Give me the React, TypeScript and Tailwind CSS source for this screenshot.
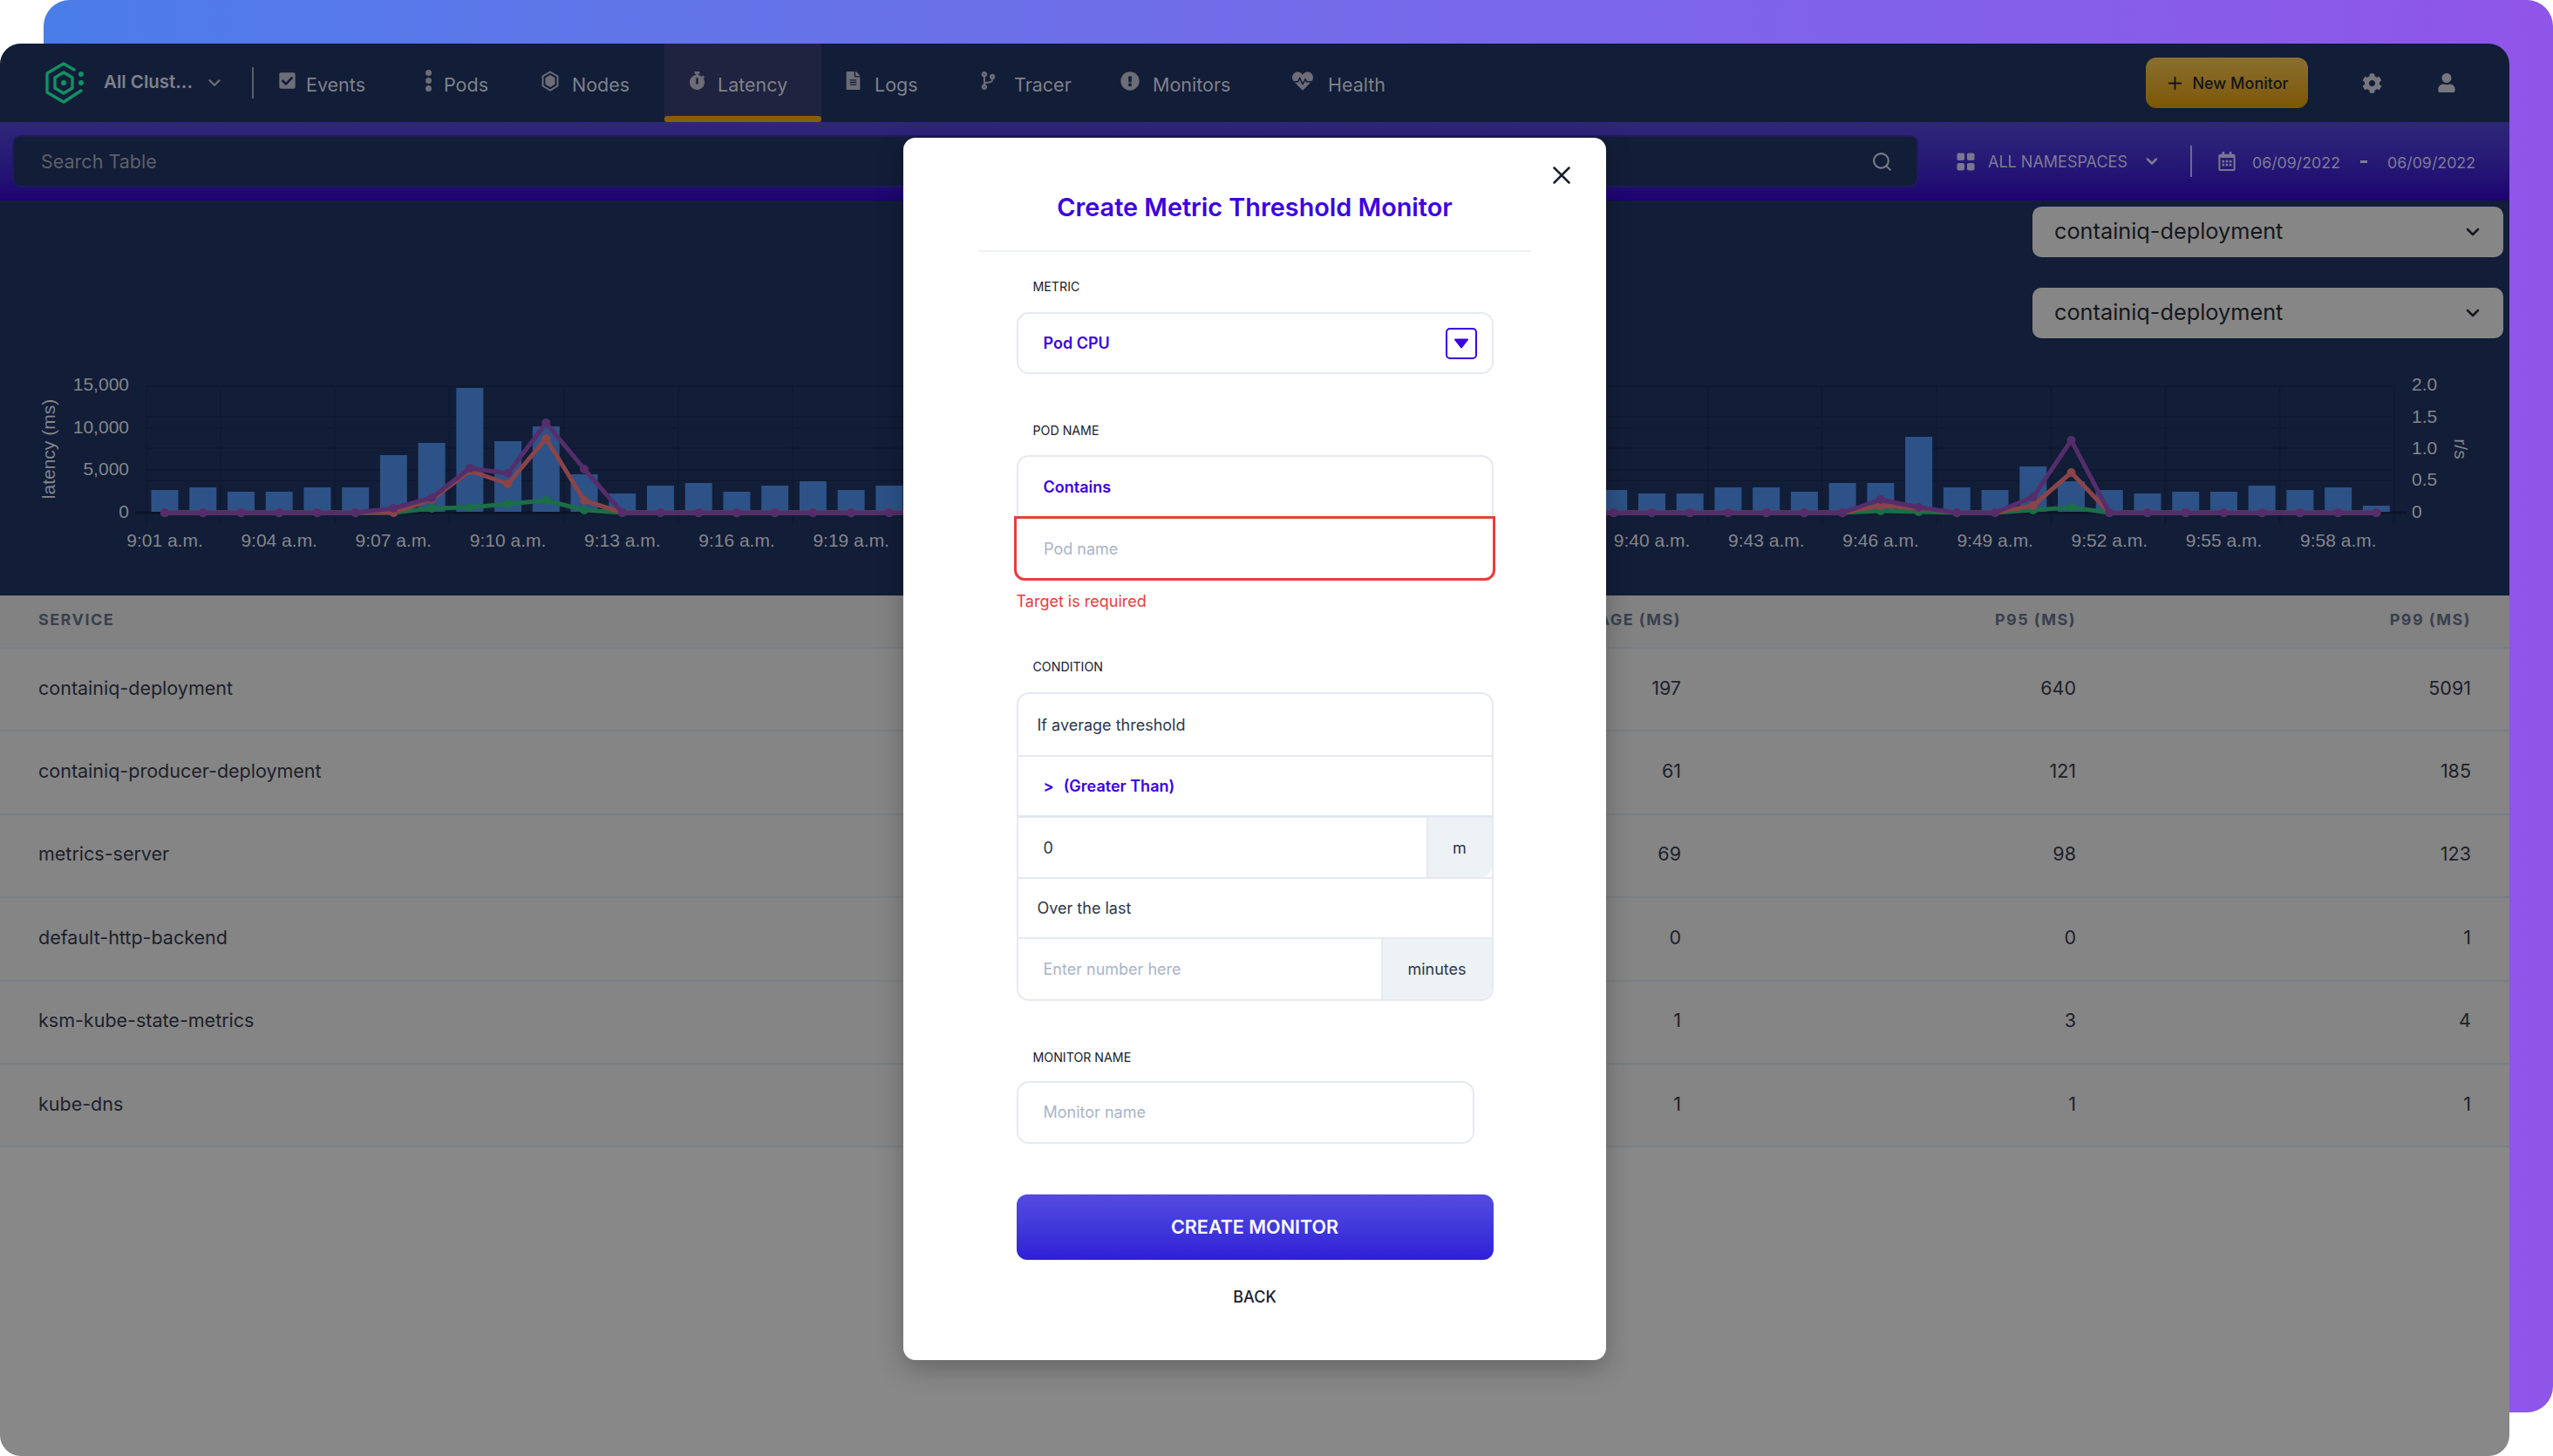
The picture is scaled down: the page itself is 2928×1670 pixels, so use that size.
import { ChevronDown, Search, X, Plus } from 'lucide-react';
import {
  FaCheckSquare,
  FaStopwatch,
  FaFileAlt,
  FaCodeBranch,
  FaExclamationCircle,
  FaHeartbeat,
  FaCog,
  FaUser,
  FaRegCalendarAlt,
} from 'react-icons/fa';
import { BsGridFill } from 'react-icons/bs';

const NodesIcon = () => (
  <svg viewBox="0 0 20 24" className="w-[20px] h-[24px]">
    <path d="M10 1.5 18.5 6.5V17.5L10 22.5 1.5 17.5V6.5Z" fill="none" stroke="#6c6d77" strokeWidth="2" />
    <path d="M10 5 15.5 8.2V15.8L10 19 4.5 15.8V8.2Z" fill="#6c6d77" />
  </svg>
);

const PodsIcon = () => (
  <div className="flex flex-col gap-[2px] w-[7px]">
    <div className="w-[7px] h-[7px] rounded-full bg-[#6c6d77]" />
    <div className="w-[7px] h-[7px] rounded-full bg-[#6c6d77]" />
    <div className="w-[7px] h-[7px] rounded-full bg-[#6c6d77]" />
  </div>
);

const Logo = () => (
  <svg viewBox="0 0 44 48" className="w-[44px] h-[48px] shrink-0">
    <g fill="none" stroke="#149063" strokeWidth="3.4" strokeLinejoin="round" strokeLinecap="round">
      <path d="M33 9 21 2 2 13V35L21 46 41 33" />
      <path d="M21 12 31 18V30L21 36 11 30V18Z" />
    </g>
    <circle cx="21" cy="24" r="3" fill="#149063" />
    <circle cx="41" cy="14" r="3" fill="#149063" />
    <circle cx="41" cy="24" r="3" fill="#149063" />
  </svg>
);

const navItems = [
  { label: 'Events', icon: <FaCheckSquare className="text-[21px] text-[#6c6d77]" />, cell: 'w-[169px]', gap: 'mr-[11px]' },
  { label: 'Pods', icon: <PodsIcon />, cell: 'w-[134px]', gap: 'mr-[14px]' },
  { label: 'Nodes', icon: <NodesIcon />, cell: 'w-[140px] -ml-[1px]', gap: 'mr-[15px]' },
  { label: 'Latency', icon: <FaStopwatch className="text-[21px] text-[#6c6d77]" />, cell: 'w-[180px] ml-[1px] pl-[27px] bg-[#20233f]', gap: 'mr-[13px]', active: true },
  { label: 'Logs', icon: <FaFileAlt className="text-[21px] text-[#6c6d77]" />, cell: 'w-[184px] pl-[26px]', gap: 'mr-[14px]' },
  { label: 'Tracer', icon: <FaCodeBranch className="text-[21px] text-[#6c6d77]" />, cell: 'w-[161px] -ml-[3px]', gap: 'mr-[19px]' },
  { label: 'Monitors', icon: <FaExclamationCircle className="text-[22px] text-[#6c6d77]" />, cell: 'w-[195px] ml-[1px]', gap: 'mr-[15px]' },
  { label: 'Health', icon: <FaHeartbeat className="text-[24px] text-[#6c6d77]" />, cell: 'w-[130px] ml-[2px]', gap: 'mr-[17px]' },
];

const rows = [
  ['containiq-deployment', '197', '640', '5091'],
  ['containiq-producer-deployment', '61', '121', '185'],
  ['metrics-server', '69', '98', '123'],
  ['default-http-backend', '0', '0', '1'],
  ['ksm-kube-state-metrics', '1', '3', '4'],
  ['kube-dns', '1', '1', '1'],
];

// bar height per minute, 9:01 to 9:59
const bars = [
  25, 28, 23, 23, 28, 28, 65, 79, 142, 81, 98, 43, 21, 30, 33, 23, 30, 35, 25, 30,
  25, 25, 25, 25, 25, 25, 25, 25, 25, 25, 25, 25, 25, 25, 25, 25, 25, 25,
  25, 21, 21, 28, 28, 23, 33, 33, 86, 28, 25, 52, 35, 25, 21, 23, 23, 30, 25, 28, 7,
];

const px = (i: number) => 189 + 43.73 * i;
const lineY = (spikes: Record<number, number>) => bars.map((_, i) => spikes[i] ?? 588);

const purple = lineY({ 6: 583, 7: 571, 8: 537, 9: 543, 10: 485, 11: 538, 45: 573, 46: 582, 49: 570, 50: 505 });
const red = lineY({ 7: 573, 8: 540, 9: 555, 10: 503, 11: 574, 45: 580, 46: 583, 49: 580, 50: 542 });
const green = lineY({ 6: 588, 7: 583, 8: 582, 9: 578, 10: 574, 11: 585, 45: 586, 46: 587, 49: 585, 50: 582 });

const timeLabels = [
  '9:01 a.m.', '9:04 a.m.', '9:07 a.m.', '9:10 a.m.', '9:13 a.m.', '9:16 a.m.', '9:19 a.m.', '9:22 a.m.', '9:25 a.m.', '9:28 a.m.',
  '9:31 a.m.', '9:34 a.m.', '9:37 a.m.', '9:40 a.m.', '9:43 a.m.', '9:46 a.m.', '9:49 a.m.', '9:52 a.m.', '9:55 a.m.', '9:58 a.m.',
];

const Series = ({ ys, color }: { ys: number[]; color: string }) => (
  <g>
    <polyline points={ys.map((y, i) => `${px(i)},${y}`).join(' ')} fill="none" stroke={color} strokeWidth="5" strokeLinejoin="round" />
    {ys.map((y, i) => (
      <circle key={i} cx={px(i)} cy={y} r="5" fill={color} />
    ))}
  </g>
);

const Chart = () => (
  <svg viewBox="0 420 2878 263" className="w-[2878px] h-[263px] font-['Liberation_Sans',sans-serif] mt-[32px]">
    {[443, 478, 491, 514, 539, 551].map((y) => (
      <line key={y} x1="168" x2="2747" y1={y} y2={y} stroke="#0f1a32" strokeWidth="2" />
    ))}
    {[168, ...Array.from({ length: 20 }, (_, k) => 253 + 131.2 * k)].map((x) => (
      <line key={x} x1={x} x2={x} y1="443" y2="602" stroke="#0f1a32" strokeWidth="2" />
    ))}
    <line x1="155" x2="2760" y1="588" y2="588" stroke="#0c1428" strokeWidth="3" />
    {bars.map((h, i) => (
      <rect key={i} x={px(i) - 15.5} y={587 - h} width="31" height={h} fill="#2d5287" />
    ))}
    <Series ys={green} color="#1b6e46" />
    <Series ys={red} color="#8a4448" />
    <Series ys={purple} color="#552d6b" />
    <g className="fill-[#84868b] text-[21px]">
      {[['15,000', 448], ['10,000', 497], ['5,000', 545], ['0', 594]].map(([t, y]) => (
        <text key={t} x="148" y={y} textAnchor="end">{t}</text>
      ))}
      {[['2.0', 448], ['1.5', 485], ['1.0', 521], ['0.5', 557], ['0', 594]].map(([t, y]) => (
        <text key={t} x="2766" y={y}>{t}</text>
      ))}
      {timeLabels.map((t, k) => (
        <text key={t} x={189 + 131.2 * k} y="627" textAnchor="middle">{t}</text>
      ))}
      <text transform="translate(63 515) rotate(-90)" textAnchor="middle">latency (ms)</text>
      <text transform="translate(2815 515) rotate(90)" textAnchor="middle">r/s</text>
    </g>
  </svg>
);

const FieldLabel = ({ text, className }: { text: string; className: string }) => (
  <div className={`pl-[19px] h-[20px] leading-[20px] text-[14.2px] text-[#1a202c] ${className}`}>{text}</div>
);

const Modal = () => (
  <div className="absolute left-[1036px] top-[108px] w-[806px] h-[1402px] bg-white rounded-[14px] shadow-[0_10px_30px_rgba(0,0,0,0.25)] flex flex-col">
    <button className="absolute right-[34px] top-[26px] text-[#1a202c]">
      <X className="w-[34px] h-[34px]" strokeWidth={1.8} />
    </button>
    <div className="mx-[86px] pt-[60px] pb-[29px] border-b-2 border-[#edf0f5] text-center">
      <h1 className="text-[28.8px] leading-[40px] font-semibold text-[#3b00e0]">Create Metric Threshold Monitor</h1>
    </div>
    <div className="px-[129.5px] flex flex-col">
      <FieldLabel text="METRIC" className="mt-[30px]" />
      <div className="mt-[19px] h-[71px] border-2 border-[#e6e9f2] rounded-[14px] flex items-center pl-[29px] pr-[17px]">
        <span className="text-[18px] font-semibold text-[#3b00e0]">Pod CPU</span>
        <div className="ml-auto w-[36px] h-[36px] border-2 border-[#3b00e0] rounded-[5px] flex items-center justify-center">
          <svg viewBox="0 0 18 12" className="w-[18px] h-[12px]">
            <path d="M2 1.5H16L9 10.5Z" fill="#3b00e0" stroke="#3b00e0" strokeWidth="2" strokeLinejoin="round" />
          </svg>
        </div>
      </div>

      <FieldLabel text="POD NAME" className="mt-[55px]" />
      <div className="mt-[18px] h-[70px] border-2 border-b-0 border-[#e6e9f2] rounded-t-[14px] flex items-center pl-[29px]">
        <span className="text-[18px] font-semibold text-[#3b00e0]">Contains</span>
      </div>
      <div className="-mx-[2.5px] h-[74px] border-[3px] border-[#e53e3e] rounded-b-[12px] flex items-center pl-[31px] text-[18px] text-[#a9b4c8]">
        Pod name
      </div>
      <div className="mt-[12px] h-[24px] leading-[24px] text-[18px] text-[#e53e3e]">Target is required</div>

      <FieldLabel text="CONDITION" className="mt-[53px]" />
      <div className="mt-[19px] h-[354px] border-2 border-[#e6e9f2] rounded-[14px] flex flex-col text-[18px] text-[#2d3748]">
        <div className="h-[72px] border-b-2 border-[#e6e9f2] flex items-center pl-[22px]">If average threshold</div>
        <div className="h-[70px] border-b-[3px] border-[#e2e8f0] flex items-center pl-[29px] font-semibold text-[#3b00e0]">
          <span className="mr-[11px]">&gt;</span>(Greater Than)
        </div>
        <div className="h-[70px] border-b-2 border-[#e6e9f2] flex">
          <div className="flex-1 flex items-center pl-[29px]">0</div>
          <div className="w-[75px] bg-[#edf2f7] border-l-2 border-[#e6e9f2] flex items-center justify-center rounded-br-[12px]">m</div>
        </div>
        <div className="h-[69px] border-b-2 border-[#e6e9f2] flex items-center pl-[22px]">Over the last</div>
        <div className="flex-1 flex">
          <div className="flex-1 flex items-center pl-[29px] text-[#a9b4c8]">Enter number here</div>
          <div className="w-[127px] bg-[#edf2f7] border-l-2 border-[#e6e9f2] flex items-center justify-center rounded-br-[12px]">minutes</div>
        </div>
      </div>

      <FieldLabel text="MONITOR NAME" className="mt-[55px]" />
      <div className="mt-[17px] w-[525px] h-[72px] border-2 border-[#e6e9f2] rounded-[14px] flex items-center pl-[29px] text-[18px] text-[#a9b4c8]">
        <span className="-mt-[2px]">Monitor name</span>
      </div>

      <button className="mt-[58px] h-[75px] rounded-[12px] bg-gradient-to-b from-[#554ae0] to-[#2f1ed8] text-white font-semibold text-[21.5px]">
        CREATE MONITOR
      </button>
      <div className="mt-[31px] h-[24px] leading-[24px] text-center text-[18px] font-medium text-[#1a202c]">BACK</div>
    </div>
  </div>
);

export default function App() {
  return (
    <div className="relative w-[2928px] h-[1670px] overflow-hidden bg-white font-['Inter',sans-serif]">
      {/* gradient card behind the window */}
      <div className="absolute left-[50px] top-0 right-0 h-[1620px] rounded-[30px] bg-gradient-to-r from-[#4a7de8] to-[#8f55e9]" />

      <div className="absolute left-0 top-[50px] w-[2878px] h-[1620px] rounded-[24px] overflow-hidden bg-[#888888] flex flex-col">
        {/* top nav */}
        <div className="h-[90px] shrink-0 bg-[#121d38] flex items-center pl-[52px] pr-[61px] text-[21.5px] text-[#7f8189]">
          <Logo />
          <span className="ml-[23px] w-[107px] text-[20.5px] font-semibold whitespace-nowrap -mt-[2px]">All Clust...</span>
          <ChevronDown className="ml-[9px] w-[22px] h-[22px] text-[#6c6d77]" strokeWidth={2.5} />
          <div className="ml-[32px] w-[2px] h-[36px] bg-[#5a5d68] mr-[28px]" />
          {navItems.map((item) => (
            <div key={item.label} className={`relative h-full flex items-center shrink-0 ${item.cell}`}>
              <span className={`-mt-[5px] ${item.gap}`}>{item.icon}</span>
              <span className="pt-[5px]">{item.label}</span>
              {item.active && <div className="absolute left-0 right-0 bottom-0 h-[7px] rounded-[3px] bg-[#875f0a]" />}
            </div>
          ))}
          <button className="ml-auto w-[186px] h-[58px] rounded-[12px] bg-gradient-to-b from-[#8a6f2d] to-[#7d5703] flex items-center justify-center text-[18px] font-medium text-[#12141c] whitespace-nowrap">
            <Plus className="w-[23px] h-[23px] mr-[8px]" strokeWidth={2} />
            New Monitor
          </button>
          <FaCog className="ml-[62px] text-[23px] text-[#75767e]" />
          <FaUser className="ml-[63px] text-[22px] text-[#75767e]" />
        </div>

        {/* filter bar */}
        <div className="h-[90px] shrink-0 bg-gradient-to-b from-[#2e2878] to-[#1f0272] flex items-center pl-[14px] text-[#7f7b94]">
          <div className="w-[2186px] h-[60px] bg-[#121d38] border-2 border-[#1e1b5a] rounded-[10px] flex items-center pl-[31px] pr-[27px] text-[21.5px] text-[#5d6068]">
            Search Table
            <Search className="ml-auto w-[25px] h-[25px] text-[#7a7c84]" strokeWidth={2} />
          </div>
          <BsGridFill className="ml-[43px] text-[23px] text-[#7a7690]" />
          <span className="ml-[14px] text-[18px] whitespace-nowrap">ALL NAMESPACES</span>
          <ChevronDown className="ml-[18px] w-[20px] h-[20px]" strokeWidth={3} />
          <div className="ml-[34px] w-[2px] h-[36px] bg-[#6e6a8a]" />
          <FaRegCalendarAlt className="ml-[29px] text-[22px] text-[#7a7690]" />
          <span className="ml-[18px] text-[17.8px] pt-[4px]">06/09/2022</span>
          <span className="ml-[23px] w-[8px] h-[3px] bg-[#7f7b94]" />
          <span className="ml-[23px] text-[17.8px] pt-[4px]">06/09/2022</span>
        </div>

        {/* chart section */}
        <div className="h-[453px] shrink-0 bg-[#121d38] relative flex flex-col">
          <div className="flex flex-col items-end gap-[35px] pt-[7px] pr-[7px]">
            {[0, 1].map((k) => (
              <div key={k} className="w-[540px] h-[58px] rounded-[10px] bg-[#868686] flex items-center pl-[25px] pr-[23px] text-[25.3px] text-[#15171c]">
                <span className="-mt-[3px]">containiq-deployment</span>
                <ChevronDown className="ml-auto w-[24px] h-[24px]" strokeWidth={2.5} />
              </div>
            ))}
          </div>
          <Chart />
        </div>

        {/* table */}
        <div className="shrink-0 bg-[#828282]">
          <div className="h-[59px] grid grid-cols-[1fr_453px_453px_453px] items-center pl-[44px] pr-[44px] pb-[4px] text-[18px] font-bold tracking-[0.08em] text-[#39404f]">
            <span>SERVICE</span>
            <span className="text-right">AVERAGE (MS)</span>
            <span className="text-right">P95 (MS)</span>
            <span className="text-right">P99 (MS)</span>
          </div>
          {rows.map((row) => (
            <div key={row[0]} className="h-[95.4px] grid grid-cols-[1fr_453px_453px_453px] items-center pl-[44px] pr-[44px] pb-[4px] bg-[#858585] border-t-2 border-[#7a7e84] text-[21.5px] text-[#1d212b]">
              <span>{row[0]}</span>
              <span className="text-right">{row[1]}</span>
              <span className="text-right">{row[2]}</span>
              <span className="text-right">{row[3]}</span>
            </div>
          ))}
        </div>
        <div className="flex-1 border-t-2 border-[#7a7e84]" />

        <Modal />
      </div>
    </div>
  );
}
